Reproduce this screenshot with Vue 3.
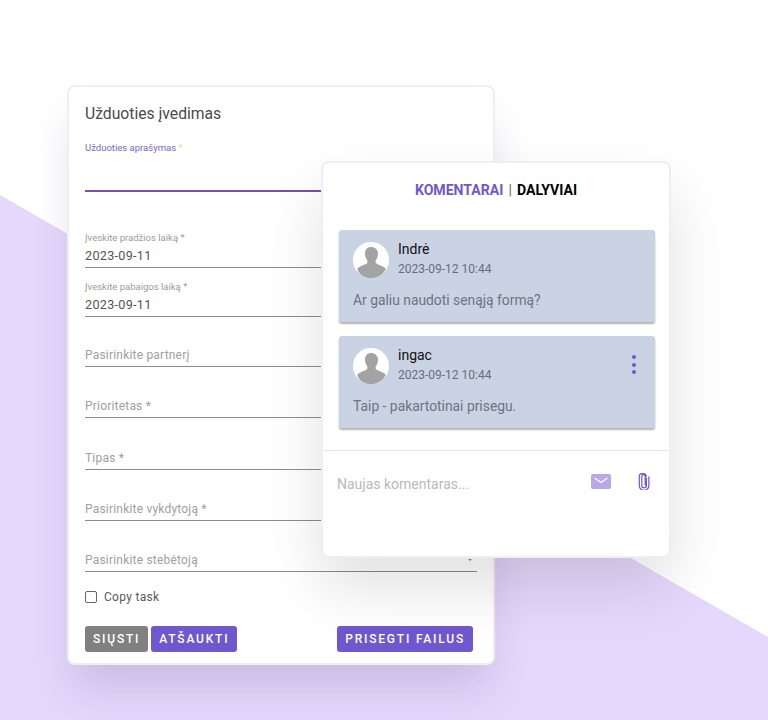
<template>
  <div class="stage">
    <div class="task-card">
      <h2 class="task-title">Užduoties įvedimas</h2>

      <div class="desc-field">
        <label class="desc-label">Užduoties aprašymas <span class="req">*</span></label>
      </div>

      <div class="date-fields">
        <div v-for="d in dates" :key="d.label" class="date-field">
          <label>{{ d.label }}</label>
          <div class="date-value">{{ d.value }}</div>
        </div>
      </div>

      <div class="selects">
        <div v-for="s in selects" :key="s" class="select-field">
          <span>{{ s }}</span>
          <i class="caret"></i>
        </div>
      </div>

      <label class="copy-row">
        <span class="checkbox"></span>
        Copy task
      </label>

      <div class="actions">
        <button class="btn grey">SIŲSTI</button>
        <button class="btn">ATŠAUKTI</button>
        <button class="btn attach">PRISEGTI FAILUS</button>
      </div>
    </div>

    <div class="comments-card">
      <div class="tabs">
        <span class="active">KOMENTARAI</span>
        <span class="sep">|</span>
        <span>DALYVIAI</span>
      </div>

      <div class="comment-list">
        <div v-for="c in comments" :key="c.name" class="comment">
          <div class="comment-head">
            <svg class="avatar" viewBox="0 0 36 36">
              <circle cx="18" cy="18" r="18" fill="#fff" />
              <path
                fill="#a3a3a3"
                d="M18 5c-3.600 0-6 2.700-6 6.400 0 2.400.7 4.600 1.800 6.200.6.900.8 1.700.6 2.700-.2 1-1 1.500-2 2-2.500 1-5.300 2-6.900 3.300-.6.500-1 1.100-1.200 1.600C6.100 32.900 11.700 36 18 36s11.900-3.100 14.700-8.800c-.2-.5-.6-1.100-1.200-1.600-1.600-1.300-4.400-2.300-6.900-3.300-1-.5-1.800-1-2-2-.2-1 0-1.800.6-2.700 1.100-1.600 1.800-3.800 1.800-6.200C25 7.700 21.600 5 18 5z"
              />
            </svg>
            <div class="who">
              <div class="name">{{ c.name }}</div>
              <div class="date">{{ c.date }}</div>
            </div>
            <div v-if="c.menu" class="kebab"><i></i><i></i><i></i></div>
          </div>
          <p class="text">{{ c.text }}</p>
        </div>
      </div>

      <div class="new-comment">
        <span class="placeholder">Naujas komentaras...</span>
        <svg class="mail" viewBox="0 0 20 15">
          <rect width="20" height="15" rx="2" fill="#b9a8e8" />
          <path d="M3.500 4 10 8.500 16.500 4" fill="none" stroke="#fff" stroke-width="1.300" />
        </svg>
        <svg class="clip" viewBox="0 0 12 17">
          <path
            d="M8.400 5v7.600a2.300 2.300 0 0 1-4.600 0V3.300a1.700 1.700 0 0 1 3.400 0v8.800M10.900 3.800v8.800a4.800 4.800 0 0 1-9.600 0V3.300A2.700 2.700 0 0 1 4 .7h1.200a3 3 0 0 1 3 2.600"
            fill="none"
            stroke="#6f58cf"
            stroke-width="1.200"
            stroke-linecap="round"
          />
        </svg>
      </div>
    </div>
  </div>
</template>

<script setup>
const dates = [
  { label: "Įveskite pradžios laiką *", value: "2023-09-11" },
  { label: "Įveskite pabaigos laiką *", value: "2023-09-11" },
];

const selects = [
  "Pasirinkite partnerį",
  "Prioritetas *",
  "Tipas *",
  "Pasirinkite vykdytoją *",
  "Pasirinkite stebėtoją",
];

const comments = [
  { name: "Indrė", date: "2023-09-12 10:44", text: "Ar galiu naudoti senąją formą?", menu: false },
  { name: "ingac", date: "2023-09-12 10:44", text: "Taip - pakartotinai prisegu.", menu: true },
];
</script>

<style>
html,
body {
  margin: 0;
  background: #fff;
}
</style>

<style scoped>
.stage {
  position: relative;
  width: 768px;
  height: 720px;
  overflow: hidden;
  padding: 85px 0 0 67px;
  box-sizing: border-box;
  background: #fff;
  font-family: Roboto, "Liberation Sans", sans-serif;
}

/* diagonal backdrop */
.stage::before {
  content: "";
  position: absolute;
  inset: 0;
  background: #e6d8fc;
  clip-path: polygon(0 195px, 768px 637px, 768px 720px, 0 720px);
}

.task-card {
  position: relative;
  width: 428px;
  height: 580px;
  box-sizing: border-box;
  padding: 17px 16px 0;
  background: #fff;
  border: 2px solid #eeeef3;
  border-radius: 8px;
  box-shadow: 0 30px 40px -5px rgba(70, 50, 110, 0.16);
}

.task-title {
  margin: 0;
  font-size: 15.700px;
  line-height: 20px;
  font-weight: 400;
  color: #4a4a4a;
}

.desc-field {
  height: 48px;
  margin-top: 18px;
  width: 392px;
  border-bottom: 2px solid #7b4fa6;
}

.desc-label {
  display: block;
  font-size: 9.500px;
  line-height: 12px;
  color: #7e63c4;
}

.req {
  color: #f3d98b;
}

.date-fields {
  margin-top: 40px;
}

.date-field {
  width: 392px;
  height: 35px;
  margin-bottom: 13px;
  border-bottom: 1px solid #8c8c8c;
}

.date-field label {
  display: block;
  font-size: 9.500px;
  line-height: 12px;
  color: #9b9b9b;
}

.date-value {
  margin-top: 3px;
  font-size: 12.600px;
  line-height: 18px;
  letter-spacing: 0.3px;
  color: #555;
}

.selects {
  margin-top: 29px;
}

.select-field {
  display: flex;
  align-items: center;
  justify-content: space-between;
  width: 392px;
  height: 18px;
  padding-bottom: 2px;
  margin-bottom: 30.250px;
  border-bottom: 1px solid #8c8c8c;
  font-size: 12px;
  letter-spacing: 0.2px;
  color: #a0a0a0;
}

.caret {
  width: 0;
  height: 0;
  margin-right: 5px;
  border: 2px solid transparent;
  border-top-color: #888;
  border-bottom: 0;
}

.copy-row {
  display: flex;
  align-items: center;
  gap: 7px;
  margin-top: -12px;
  font-size: 12px;
  line-height: 14px;
  letter-spacing: 0.3px;
  color: #5a5a5a;
}

.checkbox {
  width: 10px;
  height: 10px;
  border: 1px solid #666;
  border-radius: 2px;
}

.actions {
  display: flex;
  gap: 3px;
  margin-top: 22px;
  width: 388px;
}

.btn {
  height: 26px;
  padding: 0 8px;
  border: 0;
  border-radius: 3px;
  background: #6f58cf;
  color: #fff;
  font-family: inherit;
  font-size: 12px;
  font-weight: 500;
  letter-spacing: 1.800px;
}

.btn.grey {
  background: #808080;
}

.btn.attach {
  margin-left: auto;
}

.comments-card {
  position: absolute;
  left: 321px;
  top: 161px;
  width: 350px;
  height: 397px;
  box-sizing: border-box;
  background: #fff;
  border: 2px solid #eeeef3;
  border-radius: 8px;
  box-shadow: 0 30px 60px rgba(0, 0, 0, 0.12);
}

.tabs {
  display: flex;
  justify-content: center;
  gap: 5px;
  margin-top: 18px;
  font-size: 14.100px;
  line-height: 18px;
  font-weight: 700;
  color: #000;
}

.tabs .active {
  color: #6f58cf;
}

.tabs .sep {
  font-weight: 400;
  color: #666;
}

.comment-list {
  display: flex;
  flex-direction: column;
  gap: 14px;
  margin: 31px 14px 0 16px;
}

.comment {
  height: 92px;
  box-sizing: border-box;
  padding: 12px 14px 0;
  background: #cad3e3;
  border-radius: 3px;
  box-shadow: 0 2px 2px rgba(0, 0, 0, 0.3);
}

.comment-head {
  display: flex;
  align-items: flex-start;
  gap: 9px;
}

.avatar {
  width: 36px;
  height: 36px;
  flex: none;
}

.who {
  flex: 1;
}

.name {
  margin-top: -1px;
  font-size: 14px;
  line-height: 16px;
  color: #111;
}

.date {
  margin-top: 4px;
  font-size: 12px;
  line-height: 16px;
  color: #666e7a;
}

.kebab {
  display: flex;
  flex-direction: column;
  gap: 3.500px;
  margin: 7px 5px 0 0;
}

.kebab i {
  width: 4px;
  height: 4px;
  border-radius: 50%;
  background: #6f58cf;
}

.text {
  margin: 13px 0 0;
  font-size: 13.850px;
  line-height: 18px;
  color: #6d747f;
}

.new-comment {
  display: flex;
  align-items: flex-start;
  margin-top: 22px;
  padding: 23px 19px 0 14px;
  border-top: 1px solid #e2e5ea;
}

.placeholder {
  flex: 1;
  font-size: 14px;
  line-height: 20px;
  color: #b9b9b9;
}

.mail {
  width: 20px;
  height: 15px;
  margin-right: 27px;
}

.clip {
  width: 12px;
  height: 17px;
  margin-top: -1px;
}
</style>
